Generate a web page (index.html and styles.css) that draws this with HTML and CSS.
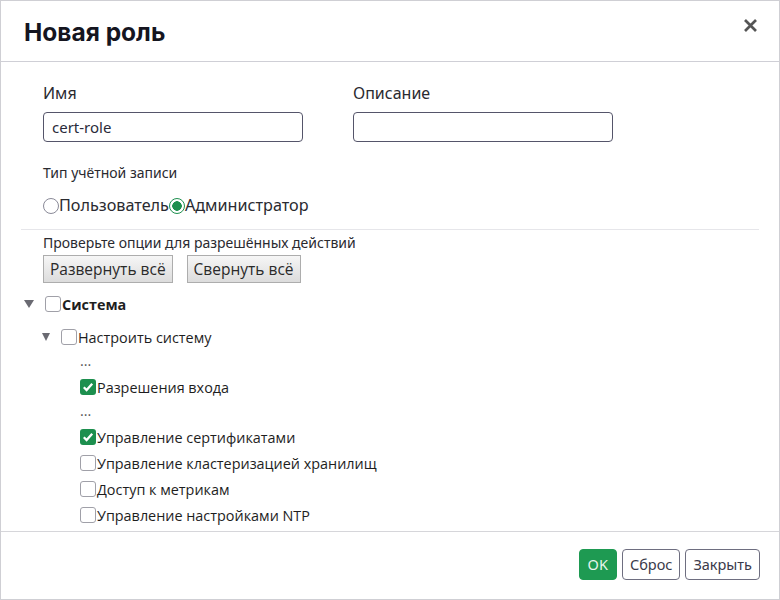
FILE: index.html
```html
<!DOCTYPE html>
<html lang="ru">
<head>
<meta charset="utf-8">
<title>Новая роль</title>
<link rel="stylesheet" href="styles.css">
</head>
<body>
<div class="dialog">
  <div class="header">
    <h1 class="title">Новая роль</h1>
    <span class="close">
      <svg width="15" height="15" viewBox="0 0 15 15"><path d="M2 2L13 13M13 2L2 13" stroke="#555" stroke-width="2.7" stroke-linecap="butt"/></svg>
    </span>
  </div>
  <div class="content">
    <div class="fields">
      <div class="field">
        <div class="label">Имя</div>
        <div class="input">cert-role</div>
      </div>
      <div class="field">
        <div class="label">Описание</div>
        <div class="input"></div>
      </div>
    </div>
    <div class="account">
      <div class="small-label">Тип учётной записи</div>
      <div class="radios">
        <span class="radio"></span><span>Пользователь</span>
        <span class="radio checked"></span><span>Администратор</span>
      </div>
    </div>
    <div class="perms">
      <div class="small-label">Проверьте опции для разрешённых действий</div>
      <div class="tools">
        <span class="gbtn">Развернуть всё</span>
        <span class="gbtn">Свернуть всё</span>
      </div>
      <div class="tree">
        <div class="row lvl0"><span class="tri"></span><span class="cb"></span><b>Система</b></div>
        <div class="row lvl1"><span class="tri"></span><span class="cb"></span><span>Настроить систему</span></div>
        <div class="row lvl2 dots">...</div>
        <div class="row lvl2"><span class="cb on"></span><span>Разрешения входа</span></div>
        <div class="row lvl2 dots">...</div>
        <div class="row lvl2"><span class="cb on"></span><span>Управление сертификатами</span></div>
        <div class="row lvl2"><span class="cb"></span><span>Управление кластеризацией хранилищ</span></div>
        <div class="row lvl2"><span class="cb"></span><span>Доступ к метрикам</span></div>
        <div class="row lvl2"><span class="cb"></span><span>Управление настройками NTP</span></div>
      </div>
    </div>
  </div>
  <div class="footer">
    <span class="btn ok">OK</span>
    <span class="btn">Сброс</span>
    <span class="btn">Закрыть</span>
  </div>
</div>
</body>
</html>
```

FILE: styles.css
```css
html, body {
  margin: 0;
  padding: 0;
  background: #ffffff;
}
body {
  font-family: "Noto Sans", "Open Sans", sans-serif;
  color: #222228;
}
.dialog {
  width: 780px;
  height: 600px;
  box-sizing: border-box;
  border: 1px solid #cfcfd4;
  display: flex;
  flex-direction: column;
  background: #fff;
}
.header {
  height: 61px;
  flex: none;
  box-sizing: border-box;
  border-bottom: 1px solid #cfcfd6;
  display: flex;
  align-items: center;
  justify-content: space-between;
  padding: 0 21px 0 23px;
}
.title {
  margin: 0;
  font-family: "Inter", "Noto Sans", sans-serif;
  font-size: 24.5px;
  font-weight: 700;
  color: #15151f;
  position: relative;
  top: 1px;
}
.close {
  display: flex;
  width: 15px;
  height: 15px;
  position: relative;
  top: -6px;
}
.content {
  flex: 1;
  overflow: hidden;
  padding: 0 20px;
}
.fields {
  display: grid;
  grid-template-columns: 260px 260px;
  column-gap: 50px;
  padding: 21px 0 0 22px;
}
.label {
  font-size: 16px;
  line-height: 20px;
  color: #2a2a30;
}
.input {
  margin-top: 9px;
  height: 30px;
  box-sizing: border-box;
  border: 1px solid #55556a;
  border-radius: 4px;
  font-size: 15px;
  line-height: 28px;
  padding: 0 8px;
  color: #2a2a3a;
}
.account {
  padding: 21px 0 0 22px;
}
.small-label {
  font-size: 14px;
  line-height: 20px;
  color: #2a2a30;
}
.radios {
  margin-top: 12px;
  display: flex;
  align-items: center;
  font-size: 16.2px;
  line-height: 20px;
  color: #2a2a30;
}
.radio {
  width: 16px;
  height: 16px;
  box-sizing: border-box;
  border: 1px solid #8a8a98;
  border-radius: 50%;
  margin-top: 2px;
  background: #fff;
}
.radio.checked {
  border: 1.5px solid #1d8f4e;
  background: radial-gradient(circle, #1d8f4e 0 4.5px, #fff 5px);
}
.perms {
  margin-top: 14px;
  border-top: 1px solid #e6e6ea;
  padding-top: 3px;
}
.perms > .small-label,
.tools {
  padding-left: 22px;
}
.tools {
  margin-top: 2px;
  display: flex;
  gap: 14px;
}
.gbtn {
  height: 28px;
  box-sizing: border-box;
  border: 1px solid #adadad;
  background: linear-gradient(#f6f6f6, #dcdcdc);
  font-family: "Open Sans", sans-serif;
  font-size: 15.5px;
  line-height: 26px;
  padding: 0 6px;
  color: #2a2a2a;
}
.tree {
  margin-top: 8px;
  padding-left: 3px;
  font-family: "Open Sans", sans-serif;
  font-size: 14.4px;
  color: #1e1e1e;
}
.row {
  height: 26px;
  display: flex;
  align-items: center;
  white-space: nowrap;
}
.row.lvl0 {
  margin-bottom: 7px;
}
.row.lvl1 {
  padding-left: 18px;
}
.row.lvl2 {
  padding-left: 56px;
}
.row.dots {
  height: 24px;
  color: #555;
  line-height: 14px;
  padding-bottom: 2px;
  box-sizing: border-box;
}
.tri {
  width: 0;
  height: 0;
  border-left: 5px solid transparent;
  border-right: 5px solid transparent;
  border-top: 8px solid #6a6a72;
  margin-right: 11px;
}
.row.lvl1 .tri {
  border-left-width: 4.5px;
  border-right-width: 4.5px;
  margin-right: 11px;
}
.cb {
  width: 16px;
  height: 16px;
  box-sizing: border-box;
  border: 1px solid #a0a0a8;
  border-radius: 3px;
  margin-right: 1px;
  background: #fff;
  flex: none;
}
.cb.on {
  border: none;
  background: #1d8f4e url("data:image/svg+xml,%3Csvg xmlns='http://www.w3.org/2000/svg' width='16' height='16' viewBox='0 0 16 16'%3E%3Cpath d='M3.8 8.2L6.6 11L12.2 4.8' fill='none' stroke='white' stroke-width='2.3'/%3E%3C/svg%3E") no-repeat center;
}
.footer {
  height: 68px;
  flex: none;
  box-sizing: border-box;
  border-top: 1px solid #d6d6da;
  display: flex;
  justify-content: flex-end;
  align-items: flex-start;
  gap: 5px;
  padding: 17px 19px 0 0;
}
.btn {
  height: 31px;
  box-sizing: border-box;
  border: 1.5px solid #6e6e80;
  border-radius: 4px;
  font-size: 14.5px;
  line-height: 28px;
  padding: 0 7px;
  color: #3a3a4a;
  background: #fff;
}
.btn.ok {
  background: #1e9a52;
  border-color: #1e9a52;
  color: #e8f4ec;
  padding: 0 8px;
}
```
